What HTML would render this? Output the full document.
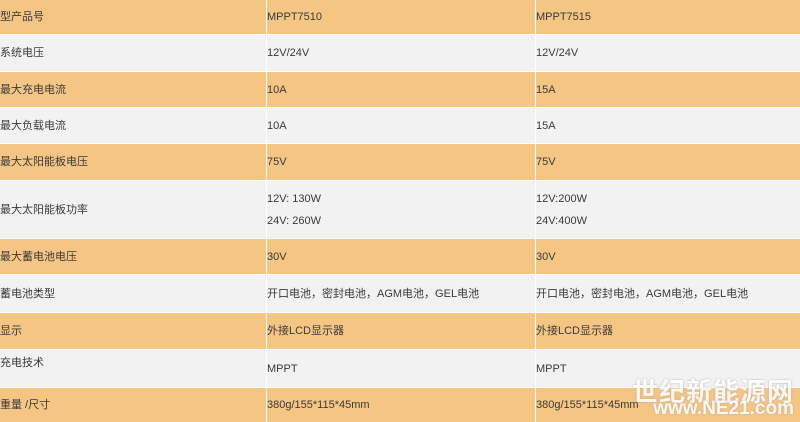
<!DOCTYPE html>
<html><head><meta charset="utf-8"><style>
body{margin:0;width:800px;height:422px;overflow:hidden;background:#fff;font-family:"Liberation Sans","Noto Sans CJK SC",sans-serif;font-size:11px;color:#3a3a3a;position:relative}
.r{position:absolute;left:0;width:800px}
.c{position:absolute;top:0;bottom:0;display:flex;flex-direction:column;justify-content:center;line-height:22px}
.a{left:0;width:266px}.b{left:267px;width:268px}.d{left:536px;width:264px}
.o{background:#f5c584}.g{background:#f2f2f2}
.o .c,.g .c{}
.sep{position:absolute;top:0;bottom:0;width:1px;background:#fff}
.wm{position:absolute;right:6px;color:#fff;opacity:.85;text-shadow:0 0 2px #aaa}
</style></head><body>
<div class="r o" style="top:0;height:34px"><div class="c a">型产品号</div><div class="c b">MPPT7510</div><div class="c d">MPPT7515</div></div>
<div class="r g" style="top:35px;height:36px"><div class="c a">系统电压</div><div class="c b">12V/24V</div><div class="c d">12V/24V</div></div>
<div class="r o" style="top:72px;height:35px"><div class="c a">最大充电电流</div><div class="c b">10A</div><div class="c d">15A</div></div>
<div class="r g" style="top:108px;height:35px"><div class="c a">最大负载电流</div><div class="c b">10A</div><div class="c d">15A</div></div>
<div class="r o" style="top:144px;height:36px"><div class="c a">最大太阳能板电压</div><div class="c b">75V</div><div class="c d">75V</div></div>
<div class="r g" style="top:181px;height:57px"><div class="c a">最大太阳能板功率</div><div class="c b">12V: 130W<br>24V: 260W</div><div class="c d">12V:200W<br>24V:400W</div></div>
<div class="r o" style="top:239px;height:35px"><div class="c a">最大蓄电池电压</div><div class="c b">30V</div><div class="c d">30V</div></div>
<div class="r g" style="top:275px;height:37px"><div class="c a">蓄电池类型</div><div class="c b">开口电池，密封电池，AGM电池，GEL电池</div><div class="c d">开口电池，密封电池，AGM电池，GEL电池</div></div>
<div class="r o" style="top:313px;height:36px"><div class="c a">显示</div><div class="c b">外接LCD显示器</div><div class="c d">外接LCD显示器</div></div>
<div class="r g" style="top:350px;height:37px"><div class="c a" style="justify-content:flex-start;padding-top:2px">充电技术</div><div class="c b">MPPT</div><div class="c d">MPPT</div></div>
<div class="r o" style="top:388px;height:34px"><div class="c a">重量 /尺寸</div><div class="c b">380g/155*115*45mm</div><div class="c d">380g/155*115*45mm</div></div>
<div class="sep" style="left:266px;height:422px"></div>
<div class="sep" style="left:535px;height:422px"></div>
<div class="wm" style="top:372px;font-size:26px;font-weight:bold;letter-spacing:1px">世纪新能源网</div>
<div class="wm" style="top:398px;font-size:19px;font-weight:bold">www.NE21.com</div>
</body></html>
